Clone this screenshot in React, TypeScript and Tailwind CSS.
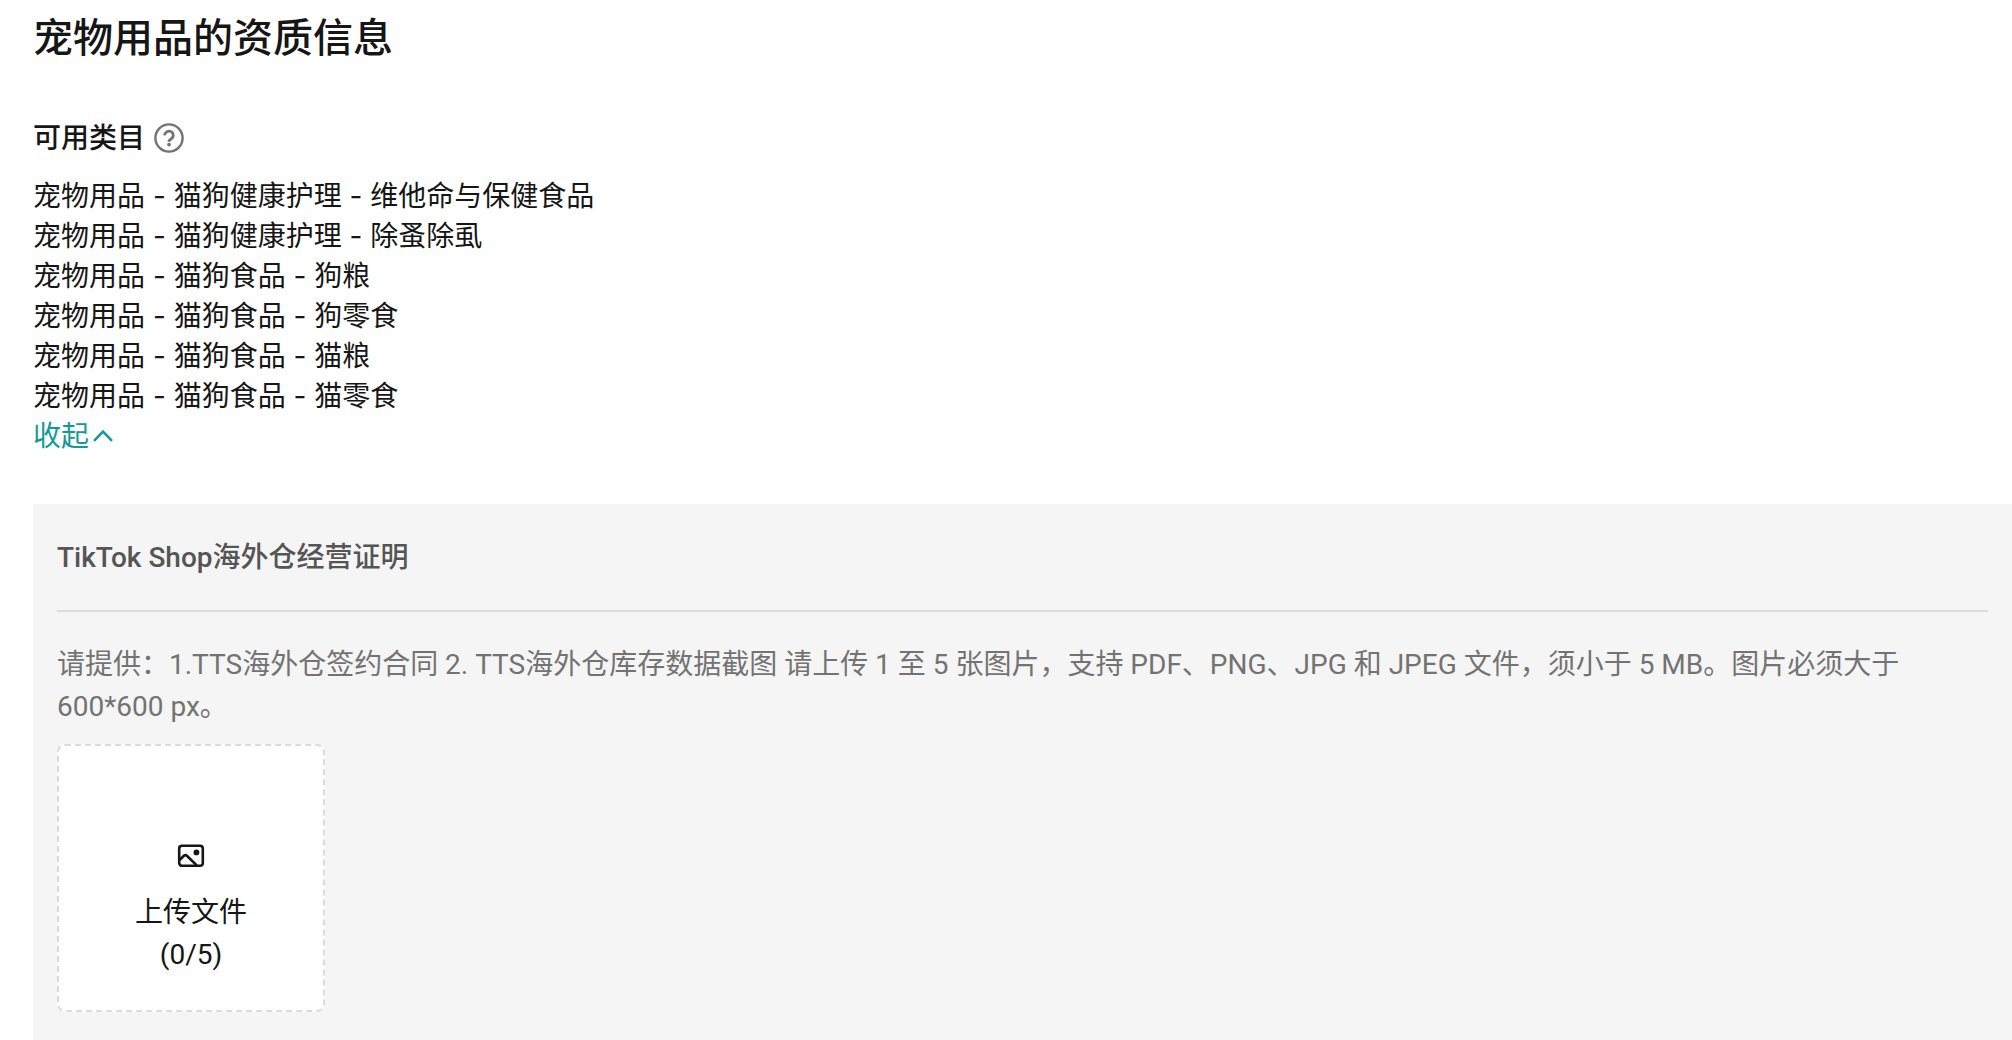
import { useState } from "react";

const categories = [
  "宠物用品 - 猫狗健康护理 - 维他命与保健食品",
  "宠物用品 - 猫狗健康护理 - 除蚤除虱",
  "宠物用品 - 猫狗食品 - 狗粮",
  "宠物用品 - 猫狗食品 - 狗零食",
  "宠物用品 - 猫狗食品 - 猫粮",
  "宠物用品 - 猫狗食品 - 猫零食",
];

const HelpIcon = () => (
  <svg className="h-[30px] w-[30px]" viewBox="0 0 30 30" fill="none" stroke="currentColor" aria-hidden="true">
    <circle cx="15" cy="15" r="13.6" strokeWidth="2.4" />
    <path d="M10.7 12.4a4.3 4.1 0 1 1 6.8 3.2c-1.6 1-2.5 1.5-2.5 3.2" strokeWidth="2.8" />
    <circle cx="15" cy="21.6" r="1.9" fill="currentColor" stroke="none" />
  </svg>
);

const ChevronUpIcon = () => (
  <svg className="h-6 w-6" viewBox="0 0 24 24" fill="none" stroke="currentColor" strokeWidth="2.5" aria-hidden="true">
    <path d="M3 16.8 12 7.6l9 9.2" />
  </svg>
);

const ImageIcon = () => (
  <svg className="h-7 w-7" viewBox="0 0 28 28" fill="none" stroke="currentColor" strokeWidth="2.6" aria-hidden="true">
    <rect x="2.2" y="3.8" width="23.6" height="20" rx="2.8" />
    <path d="M2.6 18 6.9 13.8a2.2 2.2 0 0 1 3 0l9.8 9.6" />
    <circle cx="19.4" cy="10.4" r="2.9" fill="currentColor" stroke="none" />
  </svg>
);

const App = () => {
  const [expanded, setExpanded] = useState(true);
  const visible = expanded ? categories : categories.slice(0, 3);

  return (
    <main className="flex min-h-screen flex-col bg-white pl-[33px] pt-3.5 font-['Inter','Noto_Sans_CJK_SC',sans-serif] text-[28px] leading-10 text-[#161616]">
      <h1 className="text-[40px] font-medium leading-[48px]">宠物用品的资质信息</h1>

      <section className="mt-14">
        <div className="flex items-center gap-[9px]">
          <h2 className="font-medium">可用类目</h2>
          <button type="button" aria-label="帮助" className="text-[#737373]">
            <HelpIcon />
          </button>
        </div>

        <ul className="mt-[18px]">
          {visible.map((category) => (
            <li key={category}>{category}</li>
          ))}
        </ul>
        <button
          type="button"
          aria-expanded={expanded}
          onClick={() => setExpanded(!expanded)}
          className="flex items-center gap-0.5 text-[#129a96]"
        >
          {expanded ? "收起" : "展开"}
          <span className={expanded ? "" : "rotate-180"}>
            <ChevronUpIcon />
          </span>
        </button>
      </section>

      <section className="mt-12 grow rounded-l-[4px] bg-[#f5f5f5] px-6 pb-7 pt-[34px] font-['Roboto','Noto_Sans_CJK_SC',sans-serif]">
        <h3 className="border-b-2 border-[#dbdbdb] pb-8 font-medium text-[#555555]">
          TikTok Shop海外仓经营证明
        </h3>
        <p className="mt-8 leading-[42px] text-[#737373]">
          请提供：1.TTS海外仓签约合同 2. TTS海外仓库存数据截图 请上传 1 至 5 张图片，支持 PDF、PNG、JPG 和 JPEG
          文件，须小于 5 MB。图片必须大于 600*600 px。
        </p>
        <button
          type="button"
          className="mt-4 flex h-[268px] w-[268px] flex-col items-center justify-end rounded-lg border-2 border-dashed border-[#dbdbdb] bg-white pb-[34px] leading-[42px]"
        >
          <ImageIcon />
          <span className="mt-[22px]">上传文件</span>
          <span>(0/5)</span>
        </button>
      </section>
    </main>
  );
};

export default App;
